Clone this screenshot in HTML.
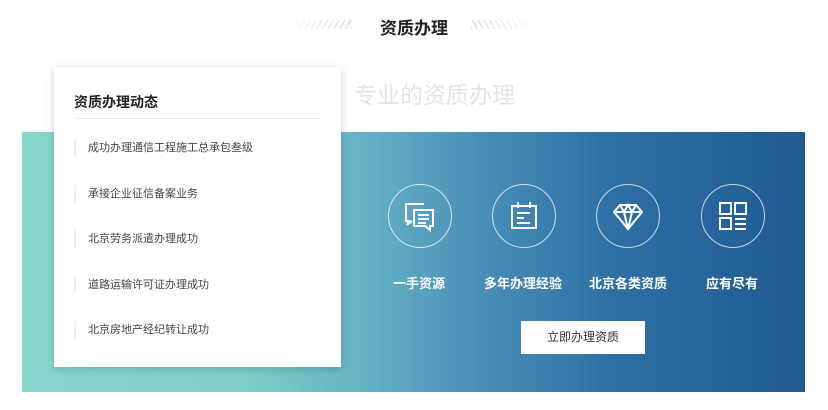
<!DOCTYPE html><html><head><meta charset="utf-8"><style>
body{margin:0;width:828px;height:410px;background:#fff;position:relative;overflow:hidden;font-family:"Liberation Sans","Noto Sans CJK SC",sans-serif}
.t{position:absolute;left:0;width:828px;top:14px;text-align:center;font-size:17px;font-weight:bold;color:#222}
.h{position:absolute;top:20px;width:66px;height:9px}
.h.l{left:286px;background:repeating-linear-gradient(-60deg,#d4d4d4 0 1.2px,transparent 1.2px 5px);-webkit-mask:linear-gradient(90deg,transparent,#000);mask:linear-gradient(90deg,transparent,#000)}
.h.r{left:471px;background:repeating-linear-gradient(60deg,#d4d4d4 0 1.2px,transparent 1.2px 5px);-webkit-mask:linear-gradient(90deg,#000,transparent);mask:linear-gradient(90deg,#000,transparent)}
.sub{position:absolute;left:354px;top:76px;font-size:23px;color:#e4e4e4}
.ban{position:absolute;left:22px;top:132px;width:783px;height:260px;background:linear-gradient(90deg,#86d6cc 0%,#7fcfc8 28%,#63afc3 45%,#4a8fb8 58%,#2f70a4 75%,#1f5a90 100%)}
.card{position:absolute;left:54px;top:67px;width:287px;height:300px;background:#fff;box-shadow:0 2px 8px rgba(0,0,0,.18)}
.card h3{margin:0;position:absolute;left:20px;top:25px;font-size:14px;color:#222}
.card .ln{position:absolute;left:20px;right:20px;top:51px;height:1px;background:#e8e8e8}
.it{position:absolute;left:20px;height:18px;border-left:2px solid #eee;padding-left:12px;font-size:11px;color:#444;line-height:18px}
.c{position:absolute;top:184px;width:62px;height:62px;border:1.5px solid rgba(255,255,255,.75);border-radius:50%}
.c svg{position:absolute;left:15px;top:15px}
.lb{position:absolute;top:273px;width:120px;text-align:center;color:#fff;font-size:13px;font-weight:bold}
.btn{position:absolute;left:521px;top:321px;width:124px;height:33px;background:#fff;text-align:center;line-height:33px;font-size:12px;color:#333}
</style></head><body>
<div class="h l"></div><div class="h r"></div>
<div class="t">资质办理</div>
<div class="sub">专业的资质办理</div>
<div class="ban"></div>
<div class="card"><h3>资质办理动态</h3><div class="ln"></div>
<div class="it" style="top:72px">成功办理通信工程施工总承包叁级</div>
<div class="it" style="top:118px">承接企业征信备案业务</div>
<div class="it" style="top:163px">北京劳务派遣办理成功</div>
<div class="it" style="top:209px">道路运输许可证办理成功</div>
<div class="it" style="top:254px">北京房地产经纪转让成功</div>
</div>
<div class="c" style="left:388px"><svg width="32" height="32" viewBox="0 0 32 32" fill="none" stroke="#fff" stroke-width="2"><path d="M20 4H2v17h3l-2 4 5-4"/><path d="M10 10h19v16h-3v4l-5-4H10z"/><path d="M14 15h11M14 19h11M14 23h8"/></svg></div>
<div class="c" style="left:492px"><svg width="32" height="32" viewBox="0 0 32 32" fill="none" stroke="#fff" stroke-width="2"><path d="M4 6h24v22H4z"/><path d="M10 2v6M22 2v6M9 13h13M9 18h7M9 23h13"/></svg></div>
<div class="c" style="left:596px"><svg width="32" height="32" viewBox="0 0 32 32" fill="none" stroke="#fff" stroke-width="2"><path d="M8 5h16l6 7-14 17L2 12z"/><path d="M2 12h28M12 12l4 17 4-17M8 5l4 7 4-7 4 7 4-7"/></svg></div>
<div class="c" style="left:701px"><svg width="32" height="32" viewBox="0 0 32 32" fill="none" stroke="#fff" stroke-width="2"><path d="M3 3h11v11H3zM18 3h11v11H18zM3 18h11v11H3zM18 19h11M18 24h11M18 29h11"/></svg></div>
<div class="lb" style="left:359px">一手资源</div>
<div class="lb" style="left:463px">多年办理经验</div>
<div class="lb" style="left:568px">北京各类资质</div>
<div class="lb" style="left:672px">应有尽有</div>
<div class="btn">立即办理资质</div>
</body></html>
